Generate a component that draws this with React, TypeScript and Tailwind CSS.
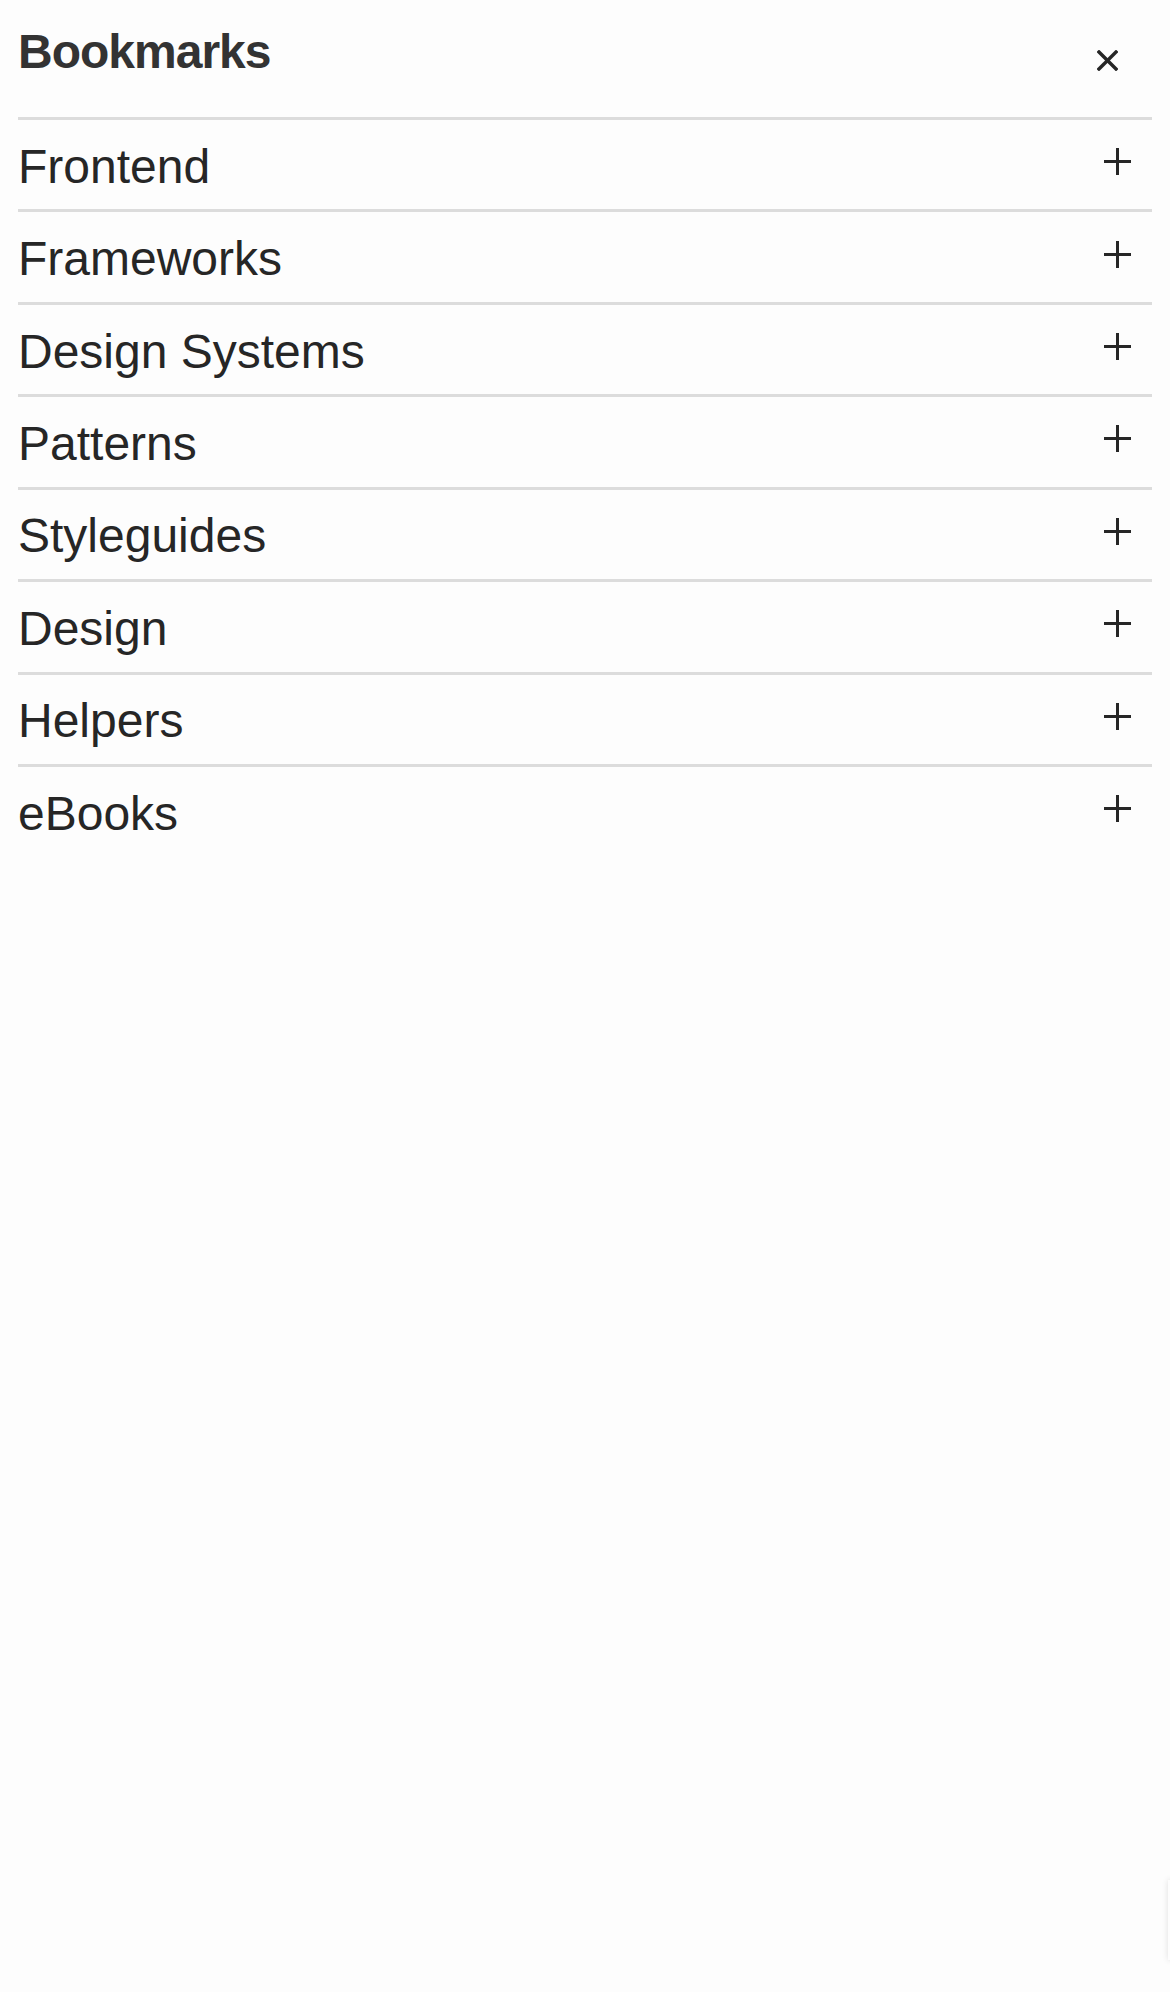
import React from "react";

const items = [
  "Frontend",
  "Frameworks",
  "Design Systems",
  "Patterns",
  "Styleguides",
  "Design",
  "Helpers",
  "eBooks",
];

function PlusIcon() {
  return (
    <svg width="27" height="27" viewBox="0 0 27 27" className="mb-[6px] shrink-0">
      <line x1="13.5" y1="0" x2="13.5" y2="27" stroke="#262626" strokeWidth="3" />
      <line x1="0" y1="13.5" x2="27" y2="13.5" stroke="#262626" strokeWidth="3" />
    </svg>
  );
}

function CloseIcon() {
  return (
    <svg width="21" height="21" viewBox="0 0 21 21" className="shrink-0">
      <line x1="2" y1="2" x2="19" y2="19" stroke="#262626" strokeWidth="3.4" strokeLinecap="square" />
      <line x1="19" y1="2" x2="2" y2="19" stroke="#262626" strokeWidth="3.4" strokeLinecap="square" />
    </svg>
  );
}

export default function App() {
  return (
    <div
      className="relative min-h-[1992px] w-full overflow-hidden bg-[#fdfdfd] px-[18px]"
      style={{ fontFamily: '"Liberation Sans", Arial, sans-serif' }}
    >
      <div className="flex h-[117px] items-start justify-between">
        <h1 className="pt-[28px] text-[48px] font-bold leading-none tracking-[-1px] text-[#333333]">
          Bookmarks
        </h1>
        <button className="mr-[34px] mt-[50px] flex">
          <CloseIcon />
        </button>
      </div>
      <ul className="border-t-[3px] border-[#dcdcdc]">
        {items.map((item, i) => (
          <li
            key={item}
            className={
              i < items.length - 1
                ? "flex h-[92.43px] items-center justify-between border-b-[3px] border-[#dcdcdc] pr-[21px]"
                : "flex h-[89.43px] items-center justify-between pr-[21px]"
            }
          >
            <span className="pt-[4px] text-[48px] leading-none text-[#262626]">{item}</span>
            <PlusIcon />
          </li>
        ))}
      </ul>
      <div className="pointer-events-none absolute right-[-6px] top-[1880px] h-[80px] w-[8px] bg-[#fdfdfd] shadow-[0_0_6px_rgba(0,0,0,0.12)]" />
    </div>
  );
}
